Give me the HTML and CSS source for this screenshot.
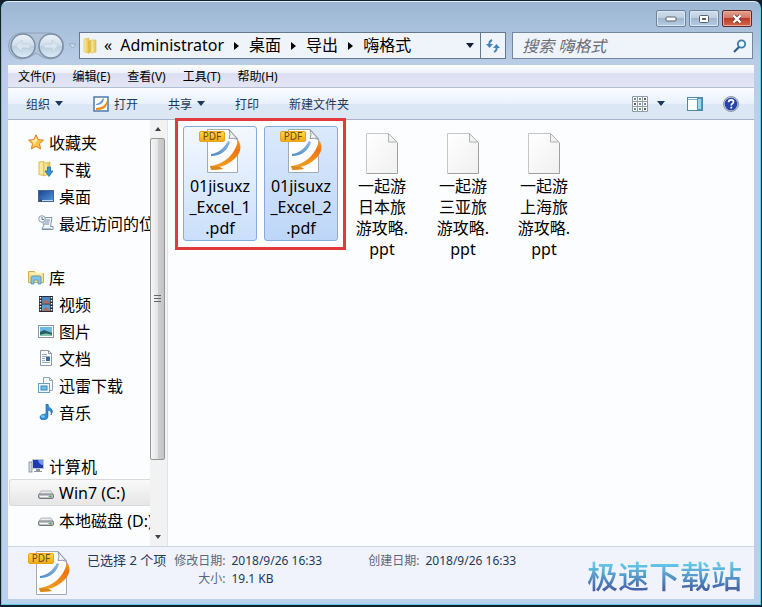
FILE: index.html
```
<!DOCTYPE html>
<html lang="zh-CN">
<head>
    <meta charset="UTF-8">
    <meta name="viewport" content="width=device-width, initial-scale=1.0">
    <title>嗨格式</title>
    <link rel="stylesheet" href="styles.css">
</head>
<body>
    <svg class="sprites" aria-hidden="true">
        <defs>
            <linearGradient id="gOrange" x1="0" y1="0" x2="0" y2="1"><stop offset="0" stop-color="#f6a01c"/><stop offset=".35" stop-color="#ee7412"/><stop offset="1" stop-color="#f3a61f"/></linearGradient>
            <linearGradient id="gBlue" x1="0" y1="1" x2="1" y2="0"><stop offset="0" stop-color="#4f8ac4"/><stop offset="1" stop-color="#8db9e0"/></linearGradient>
            <linearGradient id="gLabel" x1="0" y1="0" x2="0" y2="1"><stop offset="0" stop-color="#ffd84a"/><stop offset="1" stop-color="#f0a818"/></linearGradient>
            <linearGradient id="gPaper" x1="0" y1="0" x2="1" y2="1"><stop offset="0" stop-color="#ffffff"/><stop offset="1" stop-color="#f0f0f0"/></linearGradient>
            <linearGradient id="gFolder" x1="0" y1="0" x2="1" y2="0"><stop offset="0" stop-color="#fbefac"/><stop offset="1" stop-color="#e2bf4c"/></linearGradient>
            <linearGradient id="gScreen" x1="0" y1="0" x2="1" y2="1"><stop offset="0" stop-color="#1c3f91"/><stop offset="1" stop-color="#4f9ae0"/></linearGradient>
            <linearGradient id="gRound" x1="0" y1="0" x2="0" y2="1"><stop offset="0" stop-color="#edf3f9"/><stop offset=".48" stop-color="#cfddea"/><stop offset=".52" stop-color="#bccfe1"/><stop offset="1" stop-color="#dcebf7"/></linearGradient>
        </defs>
        <symbol id="pdf" viewBox="0 0 48 48">
            <path d="M11.500 2.500h21.500l8.500 9v34h-30z" fill="#fcfdff" stroke="#a4aab2"/>
            <path d="M33 2.500q2 5 0 9 5-1 8.500 1z" fill="#f3f6fa" stroke="#8f98a3"/>
            <path d="M15 27c8-1 13-6 17-13l2 1c-2 8-9 14-19 14z" fill="url(#gBlue)"/>
            <path d="M42 13c5 7 2 15-5 20-6 5-10 6-14 7l4 2-12 1-1-4c12-1 25-10 28-26z" fill="url(#gOrange)"/>
            <path d="M14 39l10 1 3 2-11 1z" fill="#d9881f"/>
            <rect x="3.500" y="4.500" width="25" height="10" rx="1.500" fill="url(#gLabel)" stroke="#e5a41c"/>
            <text x="16" y="13" text-anchor="middle" class="pdf-label">PDF</text>
        </symbol>
        <symbol id="blank" viewBox="0 0 48 48">
            <path d="M8.500 6.500h22l9 9v31h-31z" fill="url(#gPaper)" stroke="#c6c6c6"/>
            <path d="M39.500 16v30.500h-30.500" fill="none" stroke="#a0a0a0"/>
            <path d="M30.500 6.500v8.500h8.500z" fill="#f1f1f1" stroke="#b2b2b2"/>
        </symbol>
        <symbol id="drive" viewBox="0 0 16 16">
            <path d="M3 6h10l2.500 4h-15z" fill="#e9ebed" stroke="#a3a7ab" stroke-width=".8"/>
            <rect x=".5" y="9" width="15" height="4.500" rx="1.500" fill="#c0c4c8" stroke="#73777b"/>
            <path d="M2 11.500h8" stroke="#f6f6f6"/>
            <rect x="11.500" y="10.500" width="2" height="2" fill="#3faa45"/>
        </symbol>
    </svg>

    <div class="window">
        <header class="titlebar">
            <button class="win-btn" aria-label="最小化"><svg width="12" height="6" viewBox="0 0 12 6"><rect x="1" y="1" width="10" height="4" rx="1" fill="#fff" stroke="#596371"/></svg></button>
            <button class="win-btn" aria-label="最大化"><svg width="12" height="10" viewBox="0 0 12 10"><rect x="1.500" y="1.500" width="9" height="7" rx="1" fill="#fff" stroke="#596371"/><rect x="4.500" y="4.500" width="3" height="1" fill="#a9bdd3" stroke="#596371"/></svg></button>
            <button class="win-btn win-close" aria-label="关闭"><svg width="12" height="10" viewBox="0 0 12 10"><path d="M3 2l6 6M9 2l-6 6" stroke="#614348" stroke-width="4"/><path d="M2.500 1.500l7 7M9.500 1.500l-7 7" stroke="#fff" stroke-width="2.400"/></svg></button>
        </header>

        <div class="navbar">
            <div class="history">
                <svg class="history-back" width="56" height="28" viewBox="0 0 56 28" aria-hidden="true"><path d="M13.500 1h29a13 13 0 0 1 0 26q-7 0-14.500-6q-7 6-14.500 6a13 13 0 0 1 0-26z" fill="#b0c3d8" stroke="#8ea2b9"/></svg>
                <button class="round-btn" aria-label="后退"><svg width="26" height="26" viewBox="0 0 26 26"><circle cx="13" cy="13" r="12" fill="url(#gRound)" stroke="#7c8fa5" stroke-width="1.500"/><path d="M6 13l6-6v4h8v4h-8v4z" fill="#d9e5ef" stroke="#bccbda" stroke-width=".7"/></svg></button>
                <button class="round-btn" aria-label="前进"><svg width="26" height="26" viewBox="0 0 26 26"><circle cx="13" cy="13" r="12" fill="url(#gRound)" stroke="#7c8fa5" stroke-width="1.500"/><path d="M20 13l-6-6v4h-8v4h8v4z" fill="#d9e5ef" stroke="#bccbda" stroke-width=".7"/></svg></button>
            </div>
            <button class="history-more" aria-label="最近页面"><svg width="9" height="6" viewBox="0 0 9 6"><path d="M1 1h7l-3.500 4z" fill="#d6e4f2" stroke="#8fa7c1"/></svg></button>
            <div class="address">
                <svg width="16" height="18" viewBox="0 0 16 18"><path d="M2 2l5-1v15l-5-1z" fill="url(#gFolder)" stroke="#dfc363" stroke-width=".7"/><path d="M6 4l3-1v12l-3 2z" fill="#e4bd45"/><path d="M9 3h5v12l-5 1z" fill="url(#gFolder)" stroke="#dfc363" stroke-width=".7"/></svg>
                <button class="crumb crumb-more">«</button>
                <button class="crumb">Administrator</button>
                <svg class="crumb-arrow" width="5" height="8" viewBox="0 0 5 8"><path d="M0 0l5 4-5 4z"/></svg>
                <button class="crumb">桌面</button>
                <svg class="crumb-arrow" width="5" height="8" viewBox="0 0 5 8"><path d="M0 0l5 4-5 4z"/></svg>
                <button class="crumb">导出</button>
                <svg class="crumb-arrow" width="5" height="8" viewBox="0 0 5 8"><path d="M0 0l5 4-5 4z"/></svg>
                <button class="crumb">嗨格式</button>
                <button class="address-drop" aria-label="以前的位置"><svg width="8" height="5" viewBox="0 0 8 5"><path d="M0 0h8l-4 5z" fill="#101c3c"/></svg></button>
                <button class="refresh" aria-label="刷新"><svg width="14" height="14" viewBox="0 0 14 14"><path d="M6 1c-2 1-3 3-2.500 5M8 13c2-1 3-3 2.500-5" fill="none" stroke="#4584ba" stroke-width="2"/><path d="M0 5h7l-3.500 4zM7 9h7l-3.500-4z" fill="#4584ba"/></svg></button>
            </div>
            <div class="search">
                <input type="text" placeholder="搜索 嗨格式" aria-label="搜索 嗨格式">
                <svg width="14" height="14" viewBox="0 0 14 14"><circle cx="8.500" cy="5" r="3.700" fill="#eef7fd" stroke="#3d7faa" stroke-width="1.800"/><path d="M6 8l-5 5" stroke="#2c5b91" stroke-width="2.200"/></svg>
            </div>
        </div>

        <div class="client">
            <nav class="menubar">
                <button>文件(F)</button>
                <button>编辑(E)</button>
                <button>查看(V)</button>
                <button>工具(T)</button>
                <button>帮助(H)</button>
            </nav>

            <div class="toolbar">
                <button>组织 <svg width="8" height="5" viewBox="0 0 8 5"><path d="M0 0h8l-4 5z"/></svg></button>
                <button><svg width="16" height="16" viewBox="0 0 16 16"><rect x="1" y="1" width="14" height="14" fill="#fff" stroke="#5379a8" stroke-width="1.500"/><path d="M3 8q5-1 7-6l1 1q-1 6-8 6z" fill="#5e9ad1"/><path d="M14 4q-1 7-11 8v2q10 0 11-6z" fill="#f18c1b"/></svg>打开</button>
                <button>共享 <svg width="8" height="5" viewBox="0 0 8 5"><path d="M0 0h8l-4 5z"/></svg></button>
                <button>打印</button>
                <button>新建文件夹</button>
                <span class="spacer"></span>
                <button class="view-btn" aria-label="更改视图"><svg width="16" height="16" viewBox="0 0 16 16"><path d="M.5.500h15v15h-15z" fill="#fff" stroke="#8f9ba8"/><path d="M5.500 0v16M10.500 0v16M0 5.500h16M0 10.500h16" stroke="#8f9ba8"/><path d="M2 2h2v2h-2zM7 7h2v2h-2zM2 12h2v2h-2z" fill="#6b90b8"/><path d="M7 2h2v2h-2zM12 7h2v2h-2zM7 12h2v2h-2z" fill="#5d9a70"/><path d="M12 2h2v2h-2zM2 7h2v2h-2zM12 12h2v2h-2z" fill="#6b5560"/></svg><svg width="8" height="5" viewBox="0 0 8 5"><path d="M0 0h8l-4 5z"/></svg></button>
                <button aria-label="预览窗格"><svg width="16" height="14" viewBox="0 0 16 14"><rect x=".5" y=".5" width="15" height="13" fill="#fff" stroke="#5287a8"/><path d="M1 2.500h9" stroke="#7eb3cf"/><rect x="10.500" y="1.500" width="4" height="11" fill="#9ed5ea" stroke="#4c9abc"/></svg></button>
                <button aria-label="帮助"><svg width="16" height="16" viewBox="0 0 16 16"><circle cx="8" cy="8" r="7.500" fill="#c2c8da" stroke="#8e96ac"/><circle cx="8" cy="8" r="6.300" fill="#2745a8"/><path d="M5.500 6.200q.2-2.400 2.600-2.400 2.400 0 2.400 2 0 1.200-1.300 1.900-.9.500-.9 1.800" fill="none" stroke="#fff" stroke-width="1.700"/><rect x="7.400" y="10.700" width="1.800" height="1.800" fill="#fff"/></svg></button>
            </div>

            <div class="main">
                <nav class="tree">
                    <ul>
                        <li><a href="#" class="group"><svg width="16" height="16" viewBox="0 0 16 16"><path d="M8 .800l2.200 4.800 5.200.600-3.900 3.500 1.100 5.200-4.600-2.600-4.600 2.600 1.100-5.200-3.900-3.500 5.200-.600z" fill="#fbc646" stroke="#e07a1c"/><path d="M8 3l1.400 3.500-4.600 5.500.7-3.400-2.300-2 3.200-.500z" fill="#fff0a8"/></svg>收藏夹</a></li>
                        <li><a href="#"><svg width="16" height="16" viewBox="0 0 16 16"><path d="M1 1l5-.5v14l-5-1z" fill="#fae99c" stroke="#dbbb53"/><path d="M6 2l6-1v12l-6 2z" fill="url(#gFolder)" stroke="#d7b655" stroke-width=".7"/><path d="M9.500 6h3v4h2.500l-4 5.500-4-5.500h2.500z" fill="#3496d6" stroke="#1d65a2" stroke-width=".7"/></svg>下载</a></li>
                        <li><a href="#"><svg width="16" height="16" viewBox="0 0 16 16"><rect x=".5" y="2.500" width="15" height="11" fill="url(#gScreen)" stroke="#44678f"/><path d="M1 12.500h14" stroke="#bcd8f2"/><path d="M1 12.500h3" stroke="#3a4b5d" stroke-width="2"/></svg>桌面</a></li>
                        <li><a href="#"><svg width="16" height="16" viewBox="0 0 16 16"><path d="M4 2.500h10l-1.500 9h2.500v3h-11l1.500-4z" fill="#f2f4f7" stroke="#8595a6"/><path d="M7 5h5M6.500 7h5M6 9h5M4 14h9" stroke="#6c8fb2"/><circle cx="4" cy="4" r="3.300" fill="#edf1f5" stroke="#95a1ad"/><path d="M4 2v2.500h2" fill="none" stroke="#667b90"/></svg>最近访问的位置</a></li>
                    </ul>
                    <ul>
                        <li><a href="#" class="group"><svg width="16" height="16" viewBox="0 0 16 16"><path d="M.5 2.500h6l1 2h8v9h-15z" fill="#f5de83" stroke="#cfaf4c"/><path d="M1.500 4.500h13" stroke="#fff2b5" stroke-width="2"/><path d="M3 15v-6q0-2 2-2h6q2 0 2 2v6h-3v-4h-4v4z" fill="#82c3e5" stroke="#4b93bd" stroke-width=".8"/></svg>库</a></li>
                        <li><a href="#"><svg width="16" height="16" viewBox="0 0 16 16"><rect x="1" y="0" width="14" height="16" fill="#252c36"/><rect x="4" y="1" width="8" height="6.500" fill="#4987c2"/><rect x="4" y="8.500" width="8" height="6.500" fill="#5a9dd3"/><path d="M4 7.500l4-4 4 4M4 15l4-4 4 4" fill="#ae6c58"/><path d="M2.500 1v15M13.500 1v15" stroke="#fff" stroke-width="1.500" stroke-dasharray="1.500 1.500"/></svg>视频</a></li>
                        <li><a href="#"><svg width="16" height="16" viewBox="0 0 16 16"><rect x=".5" y="2.500" width="15" height="12" fill="#fff" stroke="#8498aa"/><rect x="2" y="4" width="12" height="9" fill="#6db9e6"/><path d="M2 9l4-2 8 3v3h-12z" fill="#255f65"/><path d="M2 12q6-3 12 0v1h-12z" fill="#83c5ae"/></svg>图片</a></li>
                        <li><a href="#"><svg width="16" height="16" viewBox="0 0 16 16"><path d="M2.500.500h8l3 3v12h-11z" fill="#fff" stroke="#8b98a5"/><path d="M10.500.500v3h3" fill="none" stroke="#8b98a5"/><path d="M4 4.500h5M4 6.500h8M4 8.500h3M4 10.500h3M4 12.500h8" stroke="#9baabd"/><rect x="8" y="7" width="4" height="4" fill="#376fad"/></svg>文档</a></li>
                        <li><a href="#"><svg width="16" height="16" viewBox="0 0 16 16"><path d="M5.500.500h6l3 3v10h-9z" fill="#f5f9fc" stroke="#92a7bb"/><path d="M11.500.500v3h3" fill="none" stroke="#92a7bb"/><rect x=".5" y="6.500" width="11" height="9" fill="#edf7fd" stroke="#6f9ec3"/><rect x="3" y="9" width="6" height="4" fill="#71bde3" stroke="#3f87b8"/></svg>迅雷下载</a></li>
                        <li><a href="#"><svg width="16" height="16" viewBox="0 0 16 16"><path d="M8 0h2q0 3 3 4.500 3 2.500 0 6.500 1-4-3-5v6.500q0 3-4 3.300-4 .2-4-2.300 0-3.500 6-3.500z" fill="#2b8fd6" stroke="#1b5f9f" stroke-width=".6"/><ellipse cx="5" cy="12.500" rx="2" ry="1.300" fill="#7cc7f2"/></svg>音乐</a></li>
                    </ul>
                    <ul>
                        <li><a href="#" class="group"><svg width="16" height="16" viewBox="0 0 16 16"><rect x="1" y="4" width="3" height="10" fill="#d7dce2" stroke="#7c8792" stroke-width=".8"/><rect x="4.500" y="1.500" width="11" height="9" fill="#2039ae" stroke="#bcc4cf"/><path d="M10 2h5v5q-4 0-5-5z" fill="#6f95eb"/><path d="M8 11h4v2h2v1h-8v-1h2z" fill="#8d97a4"/></svg>计算机</a></li>
                        <li><a href="#" class="current"><svg width="16" height="16"><use href="#drive"/></svg>Win7 (C:)</a></li>
                        <li><a href="#"><svg width="16" height="16"><use href="#drive"/></svg>本地磁盘 (D:)</a></li>
                    </ul>
                </nav>
                <div class="scrollbar">
                    <button aria-label="向上滚动"><svg width="6" height="4" viewBox="0 0 6 4"><path d="M0 4l3-4 3 4z" fill="#404040"/></svg></button>
                    <div class="thumb"><svg width="8" height="8" viewBox="0 0 8 8"><path d="M0 .500h7M0 3.500h7M0 6.500h7" stroke="#666"/></svg></div>
                    <button aria-label="向下滚动"><svg width="6" height="4" viewBox="0 0 6 4"><path d="M0 0h6l-3 4z" fill="#404040"/></svg></button>
                </div>
                <section class="files">
                    <div class="file selected"><svg width="48" height="48"><use href="#pdf"/></svg><span>01jisuxz<br>_Excel_1<br>.pdf</span></div>
                    <div class="file selected focused"><svg width="48" height="48"><use href="#pdf"/></svg><span>01jisuxz<br>_Excel_2<br>.pdf</span></div>
                    <div class="file"><svg width="48" height="48"><use href="#blank"/></svg><span>一起游<br>日本旅<br>游攻略.<br>ppt</span></div>
                    <div class="file"><svg width="48" height="48"><use href="#blank"/></svg><span>一起游<br>三亚旅<br>游攻略.<br>ppt</span></div>
                    <div class="file"><svg width="48" height="48"><use href="#blank"/></svg><span>一起游<br>上海旅<br>游攻略.<br>ppt</span></div>
                    <div class="highlight"></div>
                </section>
            </div>

            <footer class="details">
                <svg width="48" height="48"><use href="#pdf"/></svg>
                <div class="details-count">已选择 2 个项</div>
                <dl>
                    <dt>修改日期:</dt><dd>2018/9/26 16:33</dd>
                    <dt>大小:</dt><dd>19.1 KB</dd>
                </dl>
                <dl class="details-created">
                    <dt>创建日期:</dt><dd>2018/9/26 16:33</dd>
                </dl>
                <div class="watermark">极速下载站</div>
            </footer>
        </div>
    </div>
</body>
</html>
```
FILE: styles.css
```
* {
    box-sizing: border-box;
}
body {
    margin: 0;
    height: 100vh;
    padding: 1px 1px 2px;
    background: #10202c;
    font-family: "Noto Sans", "Noto Sans CJK SC", sans-serif;
    font-size: 16px;
    color: #000;
    overflow: hidden;
}
button {
    display: flex;
    align-items: center;
    padding: 0;
    border: none;
    background: none;
    font: inherit;
    color: inherit;
    white-space: nowrap;
}
svg {
    flex: none;
    display: block;
}
.sprites {
    position: absolute;
    width: 0;
    height: 0;
}
.pdf-label {
    font-size: 10px;
    fill: #6a4a10;
}
.window {
    height: 100%;
    display: flex;
    flex-direction: column;
    padding: 0 6px 5px;
    border: 1px solid #61cbe8;
    border-top-color: #e8f1fa;
    border-radius: 7px 7px 0 0;
    background: linear-gradient(#9bb6d2, #b9cde6 60px, #b9d1ea 120px);
}

/* title bar */
.titlebar {
    display: flex;
    justify-content: flex-end;
    gap: 3px;
    height: 30px;
    padding: 8px 2px 0 0;
}
.win-btn {
    justify-content: center;
    width: 30px;
    height: 17px;
    border: 1px solid #6d829b;
    border-radius: 2px;
    background: linear-gradient(#d0deed, #bccde0 50%, #9fb6cf 50%, #b9cee4);
    box-shadow: inset 0 0 0 1px #d8e5f2;
}
.win-close {
    border-color: #5e2830;
    background: linear-gradient(#e5a08f, #d27562 50%, #b93a25 50%, #d3694e);
    box-shadow: inset 0 0 0 1px #e6a998;
}

/* navigation row */
.navbar {
    display: flex;
    align-items: center;
    height: 27px;
    margin-bottom: 6px;
    padding-right: 1px;
}
.history {
    position: relative;
    display: flex;
    gap: 2px;
    padding: 0 2px;
}
.history-back {
    position: absolute;
    left: 0;
    top: -1px;
}
.round-btn {
    position: relative;
}
.history-more {
    margin: 0 2px;
}
.address {
    flex: 64;
    display: flex;
    align-items: center;
    height: 27px;
    padding-left: 2px;
    border: 1px solid #64788f;
    background: #eff4fb;
}
.crumb {
    line-height: 22px;
    padding-bottom: 2px;
}
.crumb-more {
    margin: 0 8px 0 6px;
}
.crumb-arrow {
    margin: 0 10px;
}
.address-drop {
    margin-left: auto;
    padding: 8px 6px;
}
.refresh {
    justify-content: center;
    width: 25px;
    height: 100%;
    border-left: 1px solid #64788f;
}
.search {
    flex: 34;
    display: flex;
    align-items: center;
    min-width: 0;
    height: 27px;
    margin-left: 6px;
    padding: 0 5px 0 9px;
    border: 1px solid #7388a0;
    background: #eff4fb;
}
.search input {
    flex: 1;
    min-width: 0;
    border: none;
    padding: 0;
    background: none;
    font: inherit;
    font-style: italic;
}
.search input::placeholder {
    color: #6a6d74;
}

/* client area */
.client {
    flex: 1;
    min-height: 0;
    display: flex;
    flex-direction: column;
    background: #fcfdfe;
}
.menubar {
    display: flex;
    gap: 17px;
    height: 23px;
    padding-left: 10px;
    border-bottom: 1px solid #b5bfd2;
    background: linear-gradient(#fff, #eff1fa 35%, #dcdff0 36%, #e3e5f4);
    font-size: 12px;
}
.toolbar {
    display: flex;
    height: 32px;
    padding: 0 15px 0 18px;
    border-bottom: 1px solid #a5b4c8;
    background: linear-gradient(#fafcff, #e9f2fc 50%, #dce7f5 51%, #dce7f4);
    font-size: 12px;
    color: #1e395b;
    fill: #1e395b;
}
.toolbar button {
    gap: 5px;
    margin-right: 30px;
}
.toolbar .spacer {
    flex: 1;
}
.toolbar .view-btn {
    gap: 9px;
}
.toolbar .spacer ~ button {
    margin-right: 20px;
}
.toolbar button:last-child {
    margin-right: 0;
}
.toolbar .view-btn + button {
    margin-left: 2px;
}
.main {
    flex: 1;
    min-height: 0;
    display: flex;
}

/* folder tree */
.tree {
    width: 142px;
    overflow: hidden;
    padding-top: 8px;
}
.tree ul {
    margin: 0 0 27px;
    padding: 0;
    list-style: none;
}
.tree a {
    display: flex;
    align-items: center;
    gap: 5px;
    height: 27px;
    margin-left: 1px;
    padding-left: 29px;
    color: #000;
    text-decoration: none;
    white-space: nowrap;
}
.tree .group {
    padding-left: 19px;
}
.tree .current {
    border: 1px solid #dadada;
    border-right: none;
    border-radius: 3px 0 0 3px;
    padding-left: 28px;
    background: linear-gradient(#f9f9f9, #e6e6e6);
}
.scrollbar {
    display: flex;
    flex-direction: column;
    width: 18px;
    padding-right: 2px;
    border-right: 1px solid #e0e4ea;
    background: #f2f2f2;
}
.scrollbar button {
    justify-content: center;
    height: 18px;
}
.thumb {
    display: flex;
    align-items: center;
    justify-content: center;
    flex: 0 1 322px;
    margin-bottom: auto;
    border: 1px solid #979797;
    border-radius: 2px;
    background: linear-gradient(90deg, #f6f6f6, #e5e5e5 50%, #cfcfcf 51%, #c5c5c8);
}

/* file icons */
.files {
    position: relative;
    flex: 1;
    display: flex;
    align-items: flex-start;
    gap: 7px;
    padding: 6px 0 0 15px;
}
.file {
    display: flex;
    flex-direction: column;
    align-items: center;
    width: 74px;
    border: 1px solid transparent;
    border-radius: 3px;
    text-align: center;
    line-height: 21px;
    padding-bottom: 1px;
}
.file span {
    padding-top: 1px;
}
.selected {
    border-color: #84acdd;
    background: linear-gradient(#f3f8fe, #cadffb);
}
.focused {
    background: linear-gradient(#dbe9fc, #bdd6f8);
}
.highlight {
    position: absolute;
    left: 7px;
    top: -2px;
    width: 171px;
    height: 132px;
    border: 3px solid #e0393e;
}

/* details pane */
.details {
    position: relative;
    display: flex;
    height: 53px;
    padding: 2px 10px 0 17px;
    border-top: 1px solid #cdd7e3;
    background: #f0f3fb;
    font-size: 12px;
    line-height: 18px;
    color: #1e395b;
}
.details-count {
    margin: 2px 8px 0 14px;
    font-size: 13px;
}
.details dl {
    display: grid;
    grid-template-columns: auto auto;
    align-content: start;
    column-gap: 6px;
    margin: 3px 0 0;
    white-space: nowrap;
}
.details dt {
    color: #5a6779;
    text-align: right;
}
.details dd {
    margin: 0;
}
.details .details-created {
    margin-left: 46px;
}
.watermark {
    position: absolute;
    right: 12px;
    bottom: 3px;
    font-size: 31px;
    line-height: 40px;
    font-weight: 500;
    background: linear-gradient(#63c8e8 20%, #4561a4 85%);
    background-clip: text;
    -webkit-background-clip: text;
    color: transparent;
}
```
